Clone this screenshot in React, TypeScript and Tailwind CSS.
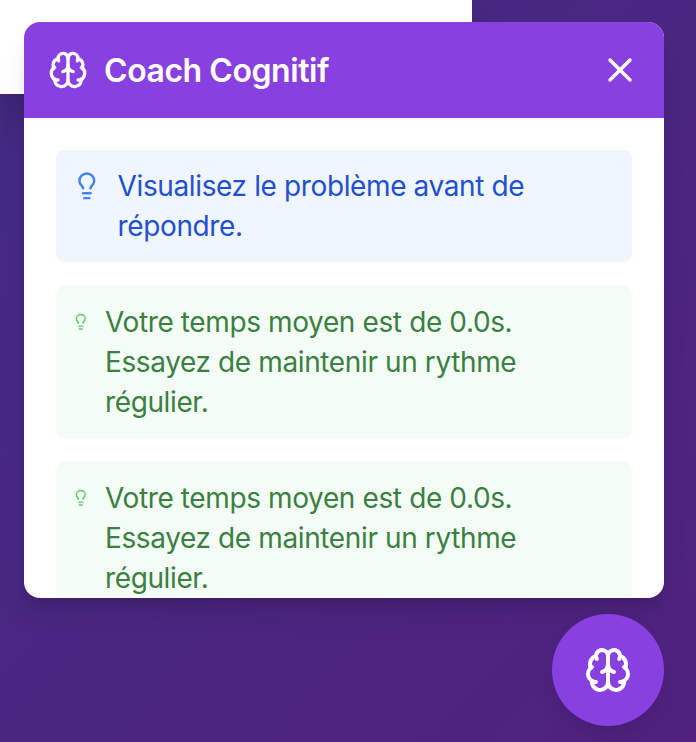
import { Brain, Lightbulb, X } from "lucide-react";

const tip = "Votre temps moyen est de 0.0s. Essayez de maintenir un rythme régulier.";

export default function App() {
  return (
    <main className="relative h-[742px] w-[696px] overflow-hidden bg-gradient-to-br from-[#432b84] to-[#50217f] font-['Inter','Liberation_Sans',sans-serif]">
      <div className="h-[94px] w-[472px] bg-white shadow-[0_20px_40px_rgba(0,0,0,0.2)]" />
      <section className="absolute left-6 top-[22px] flex h-[576px] w-[640px] flex-col overflow-hidden rounded-2xl bg-white shadow-[0_20px_30px_-6px_rgba(0,0,0,0.1),0_8px_12px_-4px_rgba(0,0,0,0.1)]">
        <header className="flex h-24 shrink-0 items-center bg-[#8840e0] px-6 text-white">
          <Brain size={40} />
          <h1 className="ml-4 grow whitespace-nowrap pt-0.5 text-[32px] font-semibold tracking-[-0.45px]">Coach Cognitif</h1>
          <X size={40} />
        </header>
        <div className="flex flex-col gap-6 p-8">
          <div className="flex h-28 rounded-lg bg-[#eff6ff] p-4 text-[#2250d0]">
            <Lightbulb size={29.6} className="mt-[5px] shrink-0 text-[#4385f0]" />
            <p className="ml-4 text-[28px] leading-10 tracking-[-0.38px]">Visualisez le problème avant de répondre.</p>
          </div>
          {[0, 1].map((i) => (
            <div key={i} className="flex h-[152px] shrink-0 rounded-lg bg-[#f3fdf6] p-4 text-[#3b7f42]">
              <Lightbulb size={17.5} className="mt-[11px] shrink-0 text-[#5fc96d]" />
              <p className="ml-[15.5px] text-[28px] leading-10 tracking-[-0.38px]">{tip}</p>
            </div>
          ))}
        </div>
      </section>
      <button className="absolute left-[552px] top-[614px] flex size-28 items-center justify-center rounded-full bg-[#8840e0] text-white shadow-[0_10px_20px_-3px_rgba(0,0,0,0.12)]">
        <Brain size={48} />
      </button>
    </main>
  );
}
